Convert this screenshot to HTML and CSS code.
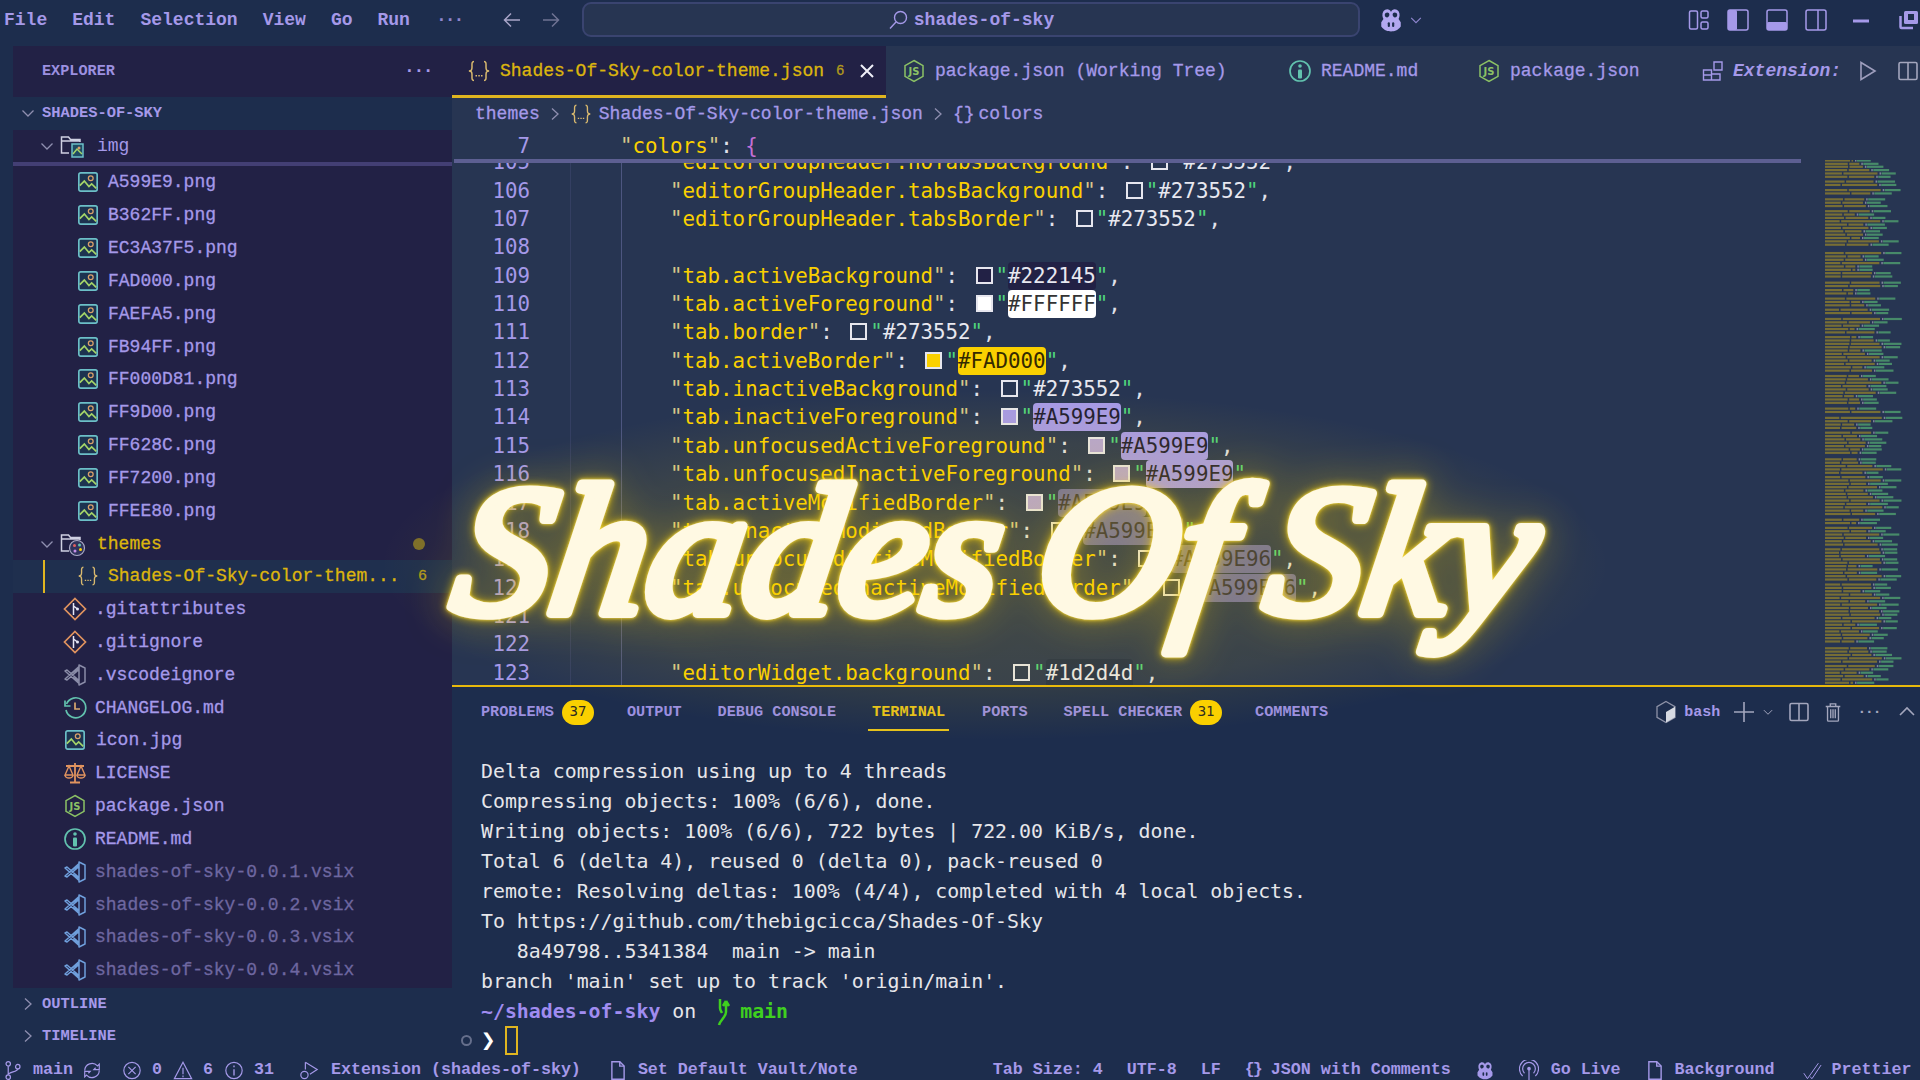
FILE: index.html
```html
<!DOCTYPE html>
<html lang="en">
<head>
<meta charset="utf-8">
<title>Shades-Of-Sky-color-theme.json - shades-of-sky</title>
<link rel="stylesheet" href="styles.css">
</head>
<body>
<svg class="defs" aria-hidden="true">
  <symbol id="i-png" viewBox="0 0 24 24"><rect x="2" y="2" width="20" height="20" rx="2" fill="#1d3350" stroke="#6cc0c8" stroke-width="1.8"/><path d="M3 16l5-5 5 6 3-3 5 5" fill="none" stroke="#a4d468" stroke-width="1.8"/><circle cx="15" cy="8" r="2.6" fill="none" stroke="#d9a06a" stroke-width="1.4"/></symbol>
  <symbol id="i-json" viewBox="0 0 24 24"><path d="M7 2.5C4.5 2.5 5 5 5 8s-.5 3.5-3 4c2.500.5 3 1 3 4s-.5 5.500 2 5.500M17 2.500c2.500 0 2 2.500 2 5.500s.5 3.500 3 4c-2.500.5-3 1-3 4s.5 5.500-2 5.500" fill="none" stroke="#d9b96e" stroke-width="1.500"/><path d="M8.500 16h1.500v1.500H8.500zM11.300 16h1.500v1.500h-1.500zM14 16h1.500v1.500H14z" fill="#d9b96e"/></symbol>
  <symbol id="i-js" viewBox="0 0 24 24"><path d="M12 1.500l9 5.200v10.600l-9 5.200-9-5.200V6.700z" fill="none" stroke="#8cc265" stroke-width="1.500"/><text x="12" y="16" text-anchor="middle" class="js-text">JS</text></symbol>
  <symbol id="i-info" viewBox="0 0 24 24"><circle cx="12" cy="12" r="10" fill="none" stroke="#62c2ae" stroke-width="1.700"/><circle cx="12" cy="7" r="1.800" fill="#62c2ae"/><rect x="10" y="10.500" width="4" height="9" rx="1" fill="#62c2ae"/></symbol>
  <symbol id="i-git" viewBox="0 0 24 24"><path d="M12 1.500L22.500 12 12 22.500 1.500 12z" fill="none" stroke="#e0935f" stroke-width="1.700"/><path d="M10.500 6v12M10.500 9l4 3" fill="none" stroke="#e6e6f5" stroke-width="1.500"/><circle cx="14.500" cy="12" r="1.500" fill="#e6e6f5"/></symbol>
  <symbol id="i-vs" viewBox="0 0 24 24"><path d="M16 2l6 3v14l-6 3zM16 5.500v13L6.500 12zM2 8l2-1 12 10.500v3L2 8zM2 16l2 1L16 6.500v-3z" fill="none" stroke="currentColor" stroke-width="1.500" stroke-linejoin="round"/></symbol>
  <symbol id="i-clock" viewBox="0 0 24 24"><path d="M3.500 8A10 10 0 1 1 3 14" fill="none" stroke="#62c2ae" stroke-width="1.700"/><path d="M2 4.500V10h5.500" fill="none" stroke="#62c2ae" stroke-width="1.700"/><path d="M12 6.500V13h5" fill="none" stroke="#d8a66f" stroke-width="1.700"/></symbol>
  <symbol id="i-law" viewBox="0 0 24 24"><path d="M12 2v19M7 21.500h10M3 5h18" fill="none" stroke="#e0935f" stroke-width="1.800"/><path d="M6 5L2 14h8zM18 5l-4 9h8zM2 14a4 3 0 0 0 8 0M14 14a4 3 0 0 0 8 0" fill="none" stroke="#e0935f" stroke-width="1.400"/></symbol>
  <symbol id="i-chev-d" viewBox="0 0 16 16"><path d="M2.500 5.500L8 11l5.500-5.500" fill="none" stroke="currentColor" stroke-width="1.300"/></symbol>
  <symbol id="i-chev-r" viewBox="0 0 16 16"><path d="M5 2.500L11 8l-6 5.500" fill="none" stroke="currentColor" stroke-width="1.300"/></symbol>
  <symbol id="i-folder-img" viewBox="0 0 26 26"><path d="M9 20H1.500V4h7l2 2.500H20V9M1.500 8H20" fill="none" stroke="#cfd0e2" stroke-width="1.500"/><rect x="12" y="11" width="11" height="13" fill="#1f4a63" stroke="#6cc0c8" stroke-width="1.500"/><path d="M13 21l4-5 5 5" fill="none" stroke="#a4d468" stroke-width="1.500"/><circle cx="19" cy="15" r="1.500" fill="#d9a06a"/></symbol>
  <symbol id="i-folder-theme" viewBox="0 0 26 26"><path d="M9 20H1.500V4h7l2 2.500H20V9M1.500 8H20" fill="none" stroke="#cfd0e2" stroke-width="1.500"/><circle cx="17" cy="17" r="7.500" fill="#30335c" stroke="#a9a9c4" stroke-width="1.200"/><circle cx="14.500" cy="14.500" r="1.500" fill="#e0605f"/><circle cx="19.500" cy="14" r="1.500" fill="#62c2ae"/><circle cx="20.500" cy="18.500" r="1.500" fill="#fad000"/><circle cx="15" cy="20" r="1.500" fill="#c68fe6"/></symbol>
  <symbol id="i-copilot" viewBox="0 0 24 24"><path d="M5 4c2-3 6-2.500 7 .5 1-3 5-3.500 7-.5 1.500 2.500 1 5.500 0 7l2 3v4c-3 4-6 4.500-9 4.500S6 22 3 18v-4l2-3C4 9.500 3.500 6.500 5 4z" fill="currentColor"/><path d="M7 5.500c1.500-1 3.500-.5 3.500 1.500S9 10 7.500 9.500 5.800 6.500 7 5.500zM17 5.500c-1.500-1-3.500-.5-3.500 1.500S15 10 16.500 9.500 18.200 6.500 17 5.500z" fill="#1d2d4d"/><rect x="9" y="14" width="2" height="4.500" rx="1" fill="#1d2d4d"/><rect x="13" y="14" width="2" height="4.500" rx="1" fill="#1d2d4d"/></symbol>
  <symbol id="i-split" viewBox="0 0 20 20"><rect x="1" y="1.500" width="18" height="17" rx="1.500" fill="none" stroke="currentColor" stroke-width="1.600"/><path d="M10 1.500v17" stroke="currentColor" stroke-width="1.600"/></symbol>
  <symbol id="i-file" viewBox="0 0 20 24"><path d="M3 2h9l5 5v15H3z" fill="none" stroke="currentColor" stroke-width="1.600"/><path d="M12 2v5h5" fill="none" stroke="currentColor" stroke-width="1.600"/></symbol>
</svg>

<div class="app">
  <header class="titlebar">
    <nav class="menu">
      <span class="menu-item">File</span><span class="menu-item">Edit</span><span class="menu-item">Selection</span><span class="menu-item">View</span><span class="menu-item">Go</span><span class="menu-item">Run</span><span class="menu-item menu-more">···</span>
    </nav>
    <div class="nav-arrows">
      <svg class="ico-20 arrow-on" viewBox="0 0 20 20"><path d="M18 10H3M9 3.500L2.500 10 9 16.500" fill="none" stroke="currentColor" stroke-width="1.500"/></svg>
      <svg class="ico-20 arrow-off" viewBox="0 0 20 20"><path d="M2 10h15M11 3.500l6.500 6.500-6.500 6.500" fill="none" stroke="currentColor" stroke-width="1.500"/></svg>
    </div>
    <div class="command">
      <svg class="ico-20" viewBox="0 0 20 20"><circle cx="12.500" cy="7.500" r="6" fill="none" stroke="currentColor" stroke-width="1.400"/><path d="M8 12l-6 6.500" stroke="currentColor" stroke-width="1.400"/></svg>
      <span>shades-of-sky</span>
    </div>
    <div class="copilot-btn">
      <svg class="ico-26"><use href="#i-copilot"/></svg>
      <svg class="ico-14"><use href="#i-chev-d"/></svg>
    </div>
    <div class="window-btns">
      <svg class="ico-22" viewBox="0 0 22 22"><rect x="1.500" y="2" width="8" height="18" rx="1.500" fill="none" stroke="currentColor" stroke-width="1.500"/><rect x="13" y="2" width="7" height="7" rx="1.500" fill="none" stroke="currentColor" stroke-width="1.500"/><rect x="13" y="13" width="7" height="7" rx="1.500" fill="none" stroke="currentColor" stroke-width="1.500"/></svg>
      <svg class="ico-22" viewBox="0 0 22 22"><rect x="1" y="1" width="20" height="20" rx="2" fill="none" stroke="currentColor" stroke-width="1.500"/><rect x="1" y="1" width="9" height="20" rx="1.500" fill="currentColor"/></svg>
      <svg class="ico-22" viewBox="0 0 22 22"><rect x="1" y="1" width="20" height="20" rx="2" fill="none" stroke="currentColor" stroke-width="1.500"/><rect x="1" y="13" width="20" height="8" rx="1.500" fill="currentColor"/></svg>
      <svg class="ico-22" viewBox="0 0 22 22"><rect x="1" y="1" width="20" height="20" rx="2" fill="none" stroke="currentColor" stroke-width="1.500"/><path d="M13 1v20" stroke="currentColor" stroke-width="1.500"/></svg>
      <svg class="ico-22 win-min" viewBox="0 0 22 22"><path d="M3 12h16" stroke="currentColor" stroke-width="3"/></svg>
      <svg class="ico-22 win-restore" viewBox="0 0 22 22"><rect x="6" y="2" width="14" height="13" rx="1.500" fill="currentColor"/><rect x="10" y="5" width="6" height="6" fill="#1d2d4d"/><path d="M2.500 7v11a1 1 0 0 0 1 1H15" fill="none" stroke="currentColor" stroke-width="2.500"/></svg>
    </div>
  </header>

  <div class="workbench">
    <aside class="sidebar">
      <div class="explorer">
        <div class="explorer-head"><span class="section-title">EXPLORER</span><span class="head-dots">···</span></div>
        <div class="root-row"><svg class="ico-16 chev"><use href="#i-chev-d"/></svg><span>SHADES-OF-SKY</span></div>
        <div class="sticky-row"><svg class="ico-16 chev"><use href="#i-chev-d"/></svg><svg class="ico-26"><use href="#i-folder-img"/></svg><span class="folder-name">img</span></div>
        <ul class="tree">
          <li class="row d2"><svg class="ico-22"><use href="#i-png"/></svg><span>A599E9.png</span></li>
          <li class="row d2"><svg class="ico-22"><use href="#i-png"/></svg><span>B362FF.png</span></li>
          <li class="row d2"><svg class="ico-22"><use href="#i-png"/></svg><span>EC3A37F5.png</span></li>
          <li class="row d2"><svg class="ico-22"><use href="#i-png"/></svg><span>FAD000.png</span></li>
          <li class="row d2"><svg class="ico-22"><use href="#i-png"/></svg><span>FAEFA5.png</span></li>
          <li class="row d2"><svg class="ico-22"><use href="#i-png"/></svg><span>FB94FF.png</span></li>
          <li class="row d2"><svg class="ico-22"><use href="#i-png"/></svg><span>FF000D81.png</span></li>
          <li class="row d2"><svg class="ico-22"><use href="#i-png"/></svg><span>FF9D00.png</span></li>
          <li class="row d2"><svg class="ico-22"><use href="#i-png"/></svg><span>FF628C.png</span></li>
          <li class="row d2"><svg class="ico-22"><use href="#i-png"/></svg><span>FF7200.png</span></li>
          <li class="row d2"><svg class="ico-22"><use href="#i-png"/></svg><span>FFEE80.png</span></li>
          <li class="row d0 themes"><svg class="ico-16 chev"><use href="#i-chev-d"/></svg><svg class="ico-26"><use href="#i-folder-theme"/></svg><span class="row-name">themes</span><i class="mod-dot"></i></li>
          <li class="row d2 selected"><svg class="ico-22"><use href="#i-json"/></svg><span class="row-name">Shades-Of-Sky-color-them...</span><span class="err-count">6</span></li>
          <li class="row d1"><svg class="ico-24"><use href="#i-git"/></svg><span>.gitattributes</span></li>
          <li class="row d1"><svg class="ico-24"><use href="#i-git"/></svg><span>.gitignore</span></li>
          <li class="row d1 grey-ico"><svg class="ico-24"><use href="#i-vs"/></svg><span>.vscodeignore</span></li>
          <li class="row d1"><svg class="ico-24"><use href="#i-clock"/></svg><span>CHANGELOG.md</span></li>
          <li class="row d1"><svg class="ico-22"><use href="#i-png"/></svg><span>icon.jpg</span></li>
          <li class="row d1"><svg class="ico-24"><use href="#i-law"/></svg><span>LICENSE</span></li>
          <li class="row d1"><svg class="ico-24"><use href="#i-js"/></svg><span>package.json</span></li>
          <li class="row d1"><svg class="ico-24"><use href="#i-info"/></svg><span>README.md</span></li>
          <li class="row d1 dim"><svg class="ico-24"><use href="#i-vs"/></svg><span>shades-of-sky-0.0.1.vsix</span></li>
          <li class="row d1 dim"><svg class="ico-24"><use href="#i-vs"/></svg><span>shades-of-sky-0.0.2.vsix</span></li>
          <li class="row d1 dim"><svg class="ico-24"><use href="#i-vs"/></svg><span>shades-of-sky-0.0.3.vsix</span></li>
          <li class="row d1 dim"><svg class="ico-24"><use href="#i-vs"/></svg><span>shades-of-sky-0.0.4.vsix</span></li>
        </ul>
      </div>
      <div class="fold-row"><svg class="ico-16 chev"><use href="#i-chev-r"/></svg><span>OUTLINE</span></div>
      <div class="fold-row"><svg class="ico-16 chev"><use href="#i-chev-r"/></svg><span>TIMELINE</span></div>
    </aside>

    <main class="main">
      <section class="editor">
        <div class="tabs">
          <div class="tab active"><svg class="ico-24"><use href="#i-json"/></svg><span>Shades-Of-Sky-color-theme.json</span><span class="tab-count">6</span><svg class="ico-16 tab-close" viewBox="0 0 16 16"><path d="M2 2l12 12M14 2L2 14" stroke="currentColor" stroke-width="2"/></svg></div>
          <div class="tab tab-wt"><svg class="ico-24"><use href="#i-js"/></svg><span>package.json (Working Tree)</span></div>
          <div class="tab tab-readme"><svg class="ico-24"><use href="#i-info"/></svg><span>README.md</span></div>
          <div class="tab tab-pkg"><svg class="ico-24"><use href="#i-js"/></svg><span>package.json</span></div>
          <div class="tab-actions">
            <svg class="ico-22" viewBox="0 0 22 22"><path d="M1.500 10h8v10h-8zM9.500 14H18v6H9.500zM1.500 15h8M12 2h8v8h-8z" fill="none" stroke="currentColor" stroke-width="1.400"/></svg>
            <span class="ext-label">Extension:</span>
            <svg class="ico-20 run" viewBox="0 0 20 20"><path d="M3 1.500L17 10 3 18.500z" fill="none" stroke="currentColor" stroke-width="1.600"/></svg>
            <svg class="ico-20 split-btn"><use href="#i-split"/></svg>
          </div>
        </div>
        <div class="breadcrumbs">
          <span>themes</span><svg class="ico-16"><use href="#i-chev-r"/></svg><svg class="ico-22"><use href="#i-json"/></svg><span>Shades-Of-Sky-color-theme.json</span><svg class="ico-16"><use href="#i-chev-r"/></svg><span class="bc-brace">{}</span><span>colors</span>
        </div>
        <div class="sticky-code">
          <span class="ln">7</span><span class="code"><span class="indent1"></span><span class="kq">"</span><span class="key">colors</span><span class="kq">"</span><span class="pun">:</span> <span class="brace">{</span></span>
        </div>
        <div class="code-area">
          <div class="lines">
            <div class="line"><span class="ln">105</span><span class="code i2"><span class="kq">"</span><span class="key">editorGroupHeader.noTabsBackground</span><span class="kq">"</span><span class="pun">:</span> <i class="swatch"></i><span class="vq">"</span><span class="val">#273552</span><span class="vq">"</span><span class="pun">,</span></span></div>
            <div class="line"><span class="ln">106</span><span class="code i2"><span class="kq">"</span><span class="key">editorGroupHeader.tabsBackground</span><span class="kq">"</span><span class="pun">:</span> <i class="swatch"></i><span class="vq">"</span><span class="val">#273552</span><span class="vq">"</span><span class="pun">,</span></span></div>
            <div class="line"><span class="ln">107</span><span class="code i2"><span class="kq">"</span><span class="key">editorGroupHeader.tabsBorder</span><span class="kq">"</span><span class="pun">:</span> <i class="swatch"></i><span class="vq">"</span><span class="val">#273552</span><span class="vq">"</span><span class="pun">,</span></span></div>
            <div class="line"><span class="ln">108</span></div>
            <div class="line"><span class="ln">109</span><span class="code i2"><span class="kq">"</span><span class="key">tab.activeBackground</span><span class="kq">"</span><span class="pun">:</span> <i class="swatch sw-night"></i><span class="vq">"</span><span class="chip chip-night">#222145</span><span class="vq">"</span><span class="pun">,</span></span></div>
            <div class="line"><span class="ln">110</span><span class="code i2"><span class="kq">"</span><span class="key">tab.activeForeground</span><span class="kq">"</span><span class="pun">:</span> <i class="swatch sw-white"></i><span class="vq">"</span><span class="chip chip-white">#FFFFFF</span><span class="vq">"</span><span class="pun">,</span></span></div>
            <div class="line"><span class="ln">111</span><span class="code i2"><span class="kq">"</span><span class="key">tab.border</span><span class="kq">"</span><span class="pun">:</span> <i class="swatch"></i><span class="vq">"</span><span class="val">#273552</span><span class="vq">"</span><span class="pun">,</span></span></div>
            <div class="line"><span class="ln">112</span><span class="code i2"><span class="kq">"</span><span class="key">tab.activeBorder</span><span class="kq">"</span><span class="pun">:</span> <i class="swatch sw-yellow"></i><span class="vq">"</span><span class="chip chip-yellow">#FAD000</span><span class="vq">"</span><span class="pun">,</span></span></div>
            <div class="line"><span class="ln">113</span><span class="code i2"><span class="kq">"</span><span class="key">tab.inactiveBackground</span><span class="kq">"</span><span class="pun">:</span> <i class="swatch"></i><span class="vq">"</span><span class="val">#273552</span><span class="vq">"</span><span class="pun">,</span></span></div>
            <div class="line"><span class="ln">114</span><span class="code i2"><span class="kq">"</span><span class="key">tab.inactiveForeground</span><span class="kq">"</span><span class="pun">:</span> <i class="swatch sw-purple"></i><span class="vq">"</span><span class="chip chip-purple">#A599E9</span><span class="vq">"</span><span class="pun">,</span></span></div>
            <div class="line"><span class="ln">115</span><span class="code i2"><span class="kq">"</span><span class="key">tab.unfocusedActiveForeground</span><span class="kq">"</span><span class="pun">:</span> <i class="swatch sw-purple2"></i><span class="vq">"</span><span class="chip chip-purple">#A599E9</span><span class="vq">"</span><span class="pun">,</span></span></div>
            <div class="line"><span class="ln">116</span><span class="code i2"><span class="kq">"</span><span class="key">tab.unfocusedInactiveForeground</span><span class="kq">"</span><span class="pun">:</span> <i class="swatch sw-purple2"></i><span class="vq">"</span><span class="chip chip-purple">#A599E9</span><span class="vq">"</span><span class="pun">,</span></span></div>
            <div class="line"><span class="ln">117</span><span class="code i2"><span class="kq">"</span><span class="key">tab.activeModifiedBorder</span><span class="kq">"</span><span class="pun">:</span> <i class="swatch sw-purple2"></i><span class="vq">"</span><span class="chip chip-faded">#A599E9</span><span class="vq">"</span><span class="pun">,</span></span></div>
            <div class="line"><span class="ln">118</span><span class="code i2"><span class="kq">"</span><span class="key">tab.inactiveModifiedBorder</span><span class="kq">"</span><span class="pun">:</span> <i class="swatch"></i><span class="vq">"</span><span class="chip chip-faded">#A599E96</span><span class="vq">"</span><span class="pun">,</span></span></div>
            <div class="line"><span class="ln">119</span><span class="code i2"><span class="kq">"</span><span class="key">tab.unfocusedActiveModifiedBorder</span><span class="kq">"</span><span class="pun">:</span> <i class="swatch"></i><span class="vq">"</span><span class="chip chip-faded">#A599E96</span><span class="vq">"</span><span class="pun">,</span></span></div>
            <div class="line"><span class="ln">120</span><span class="code i2"><span class="kq">"</span><span class="key">tab.unfocusedInactiveModifiedBorder</span><span class="kq">"</span><span class="pun">:</span> <i class="swatch"></i><span class="vq">"</span><span class="chip chip-faded">#A599E96</span><span class="vq">"</span><span class="pun">,</span></span></div>
            <div class="line"><span class="ln">121</span></div>
            <div class="line"><span class="ln">122</span></div>
            <div class="line"><span class="ln">123</span><span class="code i2"><span class="kq">"</span><span class="key">editorWidget.background</span><span class="kq">"</span><span class="pun">:</span> <i class="swatch"></i><span class="vq">"</span><span class="chip chip-deep">#1d2d4d</span><span class="vq">"</span><span class="pun">,</span></span></div>
          </div>
          <canvas class="minimap" id="minimap" width="107" height="556"></canvas>
        </div>
      </section>

      <section class="panel">
        <div class="panel-tabs">
          <span class="ptab">PROBLEMS</span><span class="badge">37</span>
          <span class="ptab">OUTPUT</span>
          <span class="ptab">DEBUG CONSOLE</span>
          <span class="ptab ptab-on">TERMINAL</span>
          <span class="ptab">PORTS</span>
          <span class="ptab">SPELL CHECKER</span><span class="badge">31</span>
          <span class="ptab">COMMENTS</span>
          <div class="panel-actions">
            <svg class="ico-24 bash-ico" viewBox="0 0 24 24"><path d="M12 1.500l9 5.200v10.600l-9 5.200-9-5.200V6.700z" fill="none" stroke="#8e93a8" stroke-width="1.300"/><path d="M12 12l9-5.300v10.600l-9 5.200z" fill="#d6dae2"/></svg>
            <span class="bash-label">bash</span>
            <svg class="ico-22 plus" viewBox="0 0 22 22"><path d="M11 1v20M1 11h20" stroke="currentColor" stroke-width="1.600"/></svg>
            <svg class="ico-12"><use href="#i-chev-d"/></svg>
            <svg class="ico-20 pa-split"><use href="#i-split"/></svg>
            <svg class="ico-20 pa-trash" viewBox="0 0 20 22"><path d="M2 5h16M7 5V2h6v3M4 5v15a1 1 0 0 0 1 1h10a1 1 0 0 0 1-1V5M7.500 8v10M10 8v10M12.500 8v10" fill="none" stroke="currentColor" stroke-width="1.500"/></svg>
            <span class="pa-dots">···</span>
            <svg class="ico-16 pa-caret" viewBox="0 0 16 16"><path d="M1 11l7-7 7 7" fill="none" stroke="currentColor" stroke-width="1.600"/></svg>
          </div>
        </div>
        <div class="terminal">
          <div class="t-line">Delta compression using up to 4 threads</div>
          <div class="t-line">Compressing objects: 100% (6/6), done.</div>
          <div class="t-line">Writing objects: 100% (6/6), 722 bytes | 722.00 KiB/s, done.</div>
          <div class="t-line">Total 6 (delta 4), reused 0 (delta 0), pack-reused 0</div>
          <div class="t-line">remote: Resolving deltas: 100% (4/4), completed with 4 local objects.</div>
          <div class="t-line">To https://github.com/thebigcicca/Shades-Of-Sky</div>
          <div class="t-line">   8a49798..5341384  main -&gt; main</div>
          <div class="t-line">branch 'main' set up to track 'origin/main'.</div>
          <div class="t-line"><span class="t-path">~/shades-of-sky</span> on <svg class="t-git" viewBox="0 0 14 28"><path d="M2 27c1-5 7-8 7-13V3M9 3L6 8M9 3l3 5M3 1v9c0 2 1 3 2 5" fill="none" stroke="currentColor" stroke-width="2.500"/></svg><span class="t-branch">main</span></div>
          <div class="t-line t-prompt"><i class="t-deco"></i><span class="t-arrow">❯</span><i class="t-cursor"></i></div>
        </div>
      </section>
    </main>
  </div>

  <footer class="statusbar">
    <svg class="st-ico" viewBox="0 0 18 22"><circle cx="4" cy="4" r="2.300" fill="none" stroke="currentColor" stroke-width="1.300"/><circle cx="4" cy="18" r="2.300" fill="none" stroke="currentColor" stroke-width="1.300"/><circle cx="14" cy="7" r="2.300" fill="none" stroke="currentColor" stroke-width="1.300"/><path d="M4 6.500v9M14 9.500c0 3-10 3-10 6" fill="none" stroke="currentColor" stroke-width="1.300"/></svg>
    <span class="st-t g-a">main</span>
    <svg class="st-ico g-b" viewBox="0 0 22 22"><path d="M3 11a8 8 0 0 1 14-5l2-2v6h-6l2-2M19 11a8 8 0 0 1-14 5l-2 2v-6h6l-2 2" fill="none" stroke="currentColor" stroke-width="1.300"/></svg>
    <svg class="st-ico g-c" viewBox="0 0 22 22"><circle cx="11" cy="11" r="9" fill="none" stroke="currentColor" stroke-width="1.300"/><path d="M7 7l8 8M15 7l-8 8" stroke="currentColor" stroke-width="1.300"/></svg>
    <span class="st-t g-a">0</span>
    <svg class="st-ico g-d" viewBox="0 0 22 22"><path d="M11 2l9.500 18h-19zM11 8v7M11 16.500v2" fill="none" stroke="currentColor" stroke-width="1.300"/></svg>
    <span class="st-t g-a">6</span>
    <svg class="st-ico g-d" viewBox="0 0 22 22"><circle cx="11" cy="11" r="9" fill="none" stroke="currentColor" stroke-width="1.300"/><path d="M11 9.500v7M11 5.500v2" stroke="currentColor" stroke-width="1.500"/></svg>
    <span class="st-t g-a">31</span>
    <svg class="st-ico g-e" viewBox="0 0 22 22"><path d="M7 2l13 8-8 5M7 2v8" fill="none" stroke="currentColor" stroke-width="1.300"/><circle cx="6" cy="16" r="4" fill="none" stroke="currentColor" stroke-width="1.300"/></svg>
    <span class="st-t g-a2">Extension (shades-of-sky)</span>
    <svg class="st-ico g-f" viewBox="0 0 20 24"><use href="#i-file"/></svg>
    <span class="st-t g-a">Set Default Vault/Note</span>
    <span class="st-t st-right">Tab Size: 4</span>
    <span class="st-t st-gap">UTF-8</span>
    <span class="st-t st-gap">LF</span>
    <span class="st-t st-gap"><span class="st-brace">{}</span> JSON with Comments</span>
    <svg class="st-ico st-gap"><use href="#i-copilot"/></svg>
    <svg class="st-ico st-gap" viewBox="0 0 22 22"><circle cx="11" cy="9" r="2" fill="currentColor"/><path d="M11 10v12M6 14a7 7 0 1 1 10 0M4 17a10.500 10.500 0 1 1 14 0" fill="none" stroke="currentColor" stroke-width="1.300"/></svg>
    <span class="st-t g-a2">Go Live</span>
    <svg class="st-ico st-gap" viewBox="0 0 20 24"><use href="#i-file"/></svg>
    <span class="st-t g-a">Background</span>
    <svg class="st-ico st-gap2" viewBox="0 0 22 22"><path d="M2 14l4 6L18 3M9 18l2 2L21 5" fill="none" stroke="currentColor" stroke-width="1.100"/></svg>
    <span class="st-t g-a">Prettier</span>
  </footer>

  <div class="logo-glow"></div>
  <svg class="logo" viewBox="0 0 1300 320"><text class="logo-text" x="30" y="190">Shades Of Sky</text></svg>
</div>
<script src="minimap.js"></script>
</body>
</html>
```

FILE: styles.css
```css
* { box-sizing: border-box; }
html, body { margin: 0; padding: 0; }
body { background: #1d2d4d; }
.defs { position: absolute; width: 0; height: 0; overflow: hidden; }
.js-text { font: 700 10px "DejaVu Sans", sans-serif; fill: #8cc265; }

.app {
  position: relative; width: 1920px; height: 1080px; overflow: hidden;
  display: flex; flex-direction: column;
  background: #1d2d4d; color: #a599e9;
  font-family: "Liberation Mono", monospace; font-size: 18px;
}
svg { flex: none; display: block; }
.ico-12 { width: 12px; height: 12px; }
.ico-14 { width: 14px; height: 14px; }
.ico-16 { width: 16px; height: 16px; }
.ico-20 { width: 20px; height: 20px; }
.ico-22 { width: 22px; height: 22px; }
.ico-24 { width: 24px; height: 24px; }
.ico-26 { width: 26px; height: 26px; }

/* title bar */
.titlebar { flex: none; height: 46px; display: flex; align-items: center; padding-bottom: 7px; }
.menu { display: flex; align-items: center; padding-left: 4px; gap: 25px; width: 502px; font-weight: 700; }
.menu-item { line-height: 20px; }
.menu-more { color: #8f86cf; letter-spacing: -2px; margin-left: 1px; }
.nav-arrows { display: flex; gap: 19px; width: 80px; }
.arrow-on { color: #a9a5c8; }
.arrow-off { color: #6f7393; }
.command {
  width: 778px; height: 35px; flex: none;
  display: flex; align-items: center; justify-content: center; gap: 6px;
  background: #273552; border: 2px solid #3a4470; border-radius: 9px;
  font-weight: 700;
}
.copilot-btn { display: flex; align-items: center; gap: 5px; margin-left: 18px; color: #b3a8f0; }
.copilot-btn .ico-14 { color: #8f86cf; }
.window-btns { display: flex; align-items: center; gap: 17px; margin-left: 265px; color: #a599e9; }
.win-min { margin-left: 6px; }
.win-restore { margin-left: 9px; }

/* layout */
.workbench { flex: 1; min-height: 0; display: flex; }
.sidebar { flex: none; width: 452px; padding-left: 13px; display: flex; flex-direction: column; }
.explorer { flex: none; height: 942px; background: #222145; display: flex; flex-direction: column; }
.main { flex: 1; min-width: 0; display: flex; flex-direction: column; }

/* sidebar */
.explorer-head { flex: none; height: 51px; padding: 0 20px 2px 29px; display: flex; align-items: center; justify-content: space-between; }
.section-title { font-size: 15.200px; font-weight: 700; color: #9c90e0; }
.head-dots { font-weight: 700; letter-spacing: -1.500px; }
.root-row {
  flex: none; height: 33px; display: flex; align-items: center; gap: 6px; padding: 0 0 1px 7px;
  background: #1d2d4d; font-size: 15.400px; font-weight: 700;
}
.chev { color: #8f8fb0; }
.sticky-row {
  flex: none; height: 36px; padding: 0 0 0 26px; display: flex; align-items: center; gap: 5px;
  border-bottom: 4px solid #433f74;
}
.folder-name { margin-left: 6px; }
.tree { list-style: none; margin: 0; padding: 0; }
.row { height: 32.830px; display: flex; align-items: center; gap: 9px; -webkit-text-stroke: .3px currentColor; }
.d2 { padding-left: 64px; }
.d1 { padding-left: 50px; }
.d0 { padding-left: 26px; gap: 5px; }
.d1 .ico-22 { margin: 0 1px; }
.d1 .ico-24 { margin-right: -1px; }
.themes .row-name { color: #dcb50e; margin-left: 6px; flex: 1; }
.mod-dot { width: 12px; height: 12px; margin-right: 27px; border-radius: 50%; background: #7d6e2a; }
.selected { position: relative; background: #1f2f4e; color: #dcb50e; }
.selected::before { content: ""; position: absolute; left: 30px; top: 0; bottom: 0; width: 2px; background: #e0b520; }
.selected .row-name { flex: 1; }
.err-count { margin-right: 25px; font-size: 15px; color: #b29a1c; }
.grey-ico svg { color: #8a8ca8; }
.dim { color: #6e67a0; }
.dim svg { color: #6f9fdc; }
.fold-row { flex: none; height: 32px; display: flex; align-items: center; gap: 6px; padding-left: 7px; font-size: 15.400px; font-weight: 700; }
.fold-row:first-of-type { margin-top: 2px; }

/* editor */
.editor { flex: none; height: 639px; background: #273552; display: flex; flex-direction: column; }
.tabs { flex: none; height: 52px; display: flex; align-items: stretch; }
.tab { flex: none; display: flex; align-items: center; gap: 9px; padding: 0 0 3px 16px; -webkit-text-stroke: .3px currentColor; }
.tab.active { width: 434px; background: #222145; color: #dcb50e; border-bottom: 3px solid #e0b520; padding: 0 0 0 15px; }
.tab-wt { width: 386px; }
.tab-readme { width: 189px; }
.tab-pkg { width: 236px; }
.tab-count { font-size: 14px; margin-left: 3px; color: #b29a1c; }
.tab-close { color: #f0f0f8; margin-left: 6px; }
.tab-actions { display: flex; align-items: center; padding: 0 0 3px 5px; }
.ext-label { font-weight: 700; font-style: italic; margin-left: 9px; }
.run { margin-left: 17px; color: #9e9ebd; }
.split-btn { margin-left: 20px; color: #a3a6bd; }
.breadcrumbs { flex: none; height: 33px; display: flex; align-items: center; padding: 0 0 2px 23px; gap: 7px; -webkit-text-stroke: .3px currentColor; }
.breadcrumbs .ico-16 { color: #8f8fb0; }
.bc-brace { margin-right: -3px; }
.sticky-code {
  flex: none; height: 29px; padding-top: 1px; position: relative; z-index: 2; display: flex; align-items: center; white-space: pre;
  font: 20.800px/28px "DejaVu Sans Mono", monospace; color: #e8e8f0; background: #273552;
}
.sticky-code::after { content: ""; position: absolute; left: 2px; right: 119px; bottom: -3px; height: 4px; background: #5d5f92; }
.indent1 { display: inline-block; width: 50px; }
.code-area {
  position: relative; flex: 1; min-height: 0; overflow: hidden;
  background:
    linear-gradient(#343f62, #343f62) 118px 0 / 1px 100% no-repeat,
    linear-gradient(#4d5680, #4d5680) 169px 0 / 1px 100% no-repeat;
}
.lines { margin-top: -11.800px; font: 20.800px/28.370px "DejaVu Sans Mono", monospace; color: #e8e8f0; }
.line { height: 28.370px; display: flex; white-space: pre; }
.ln { flex: none; width: 78px; text-align: right; color: #a599e9; font-family: "DejaVu Sans Mono", monospace; }
.code { margin-left: 40px; }
.i2 { padding-left: 100px; }
.key { color: #fad000; }
.kq { color: #d8c78a; }
.vq { color: #4fd57d; }
.val { color: #e8e8f0; }
.pun { color: #e0e0ea; }
.brace { color: #c36fd6; }
.swatch { display: inline-block; width: 17px; height: 17px; margin: 0 3px 0 5px; border: 2px solid #e6e6ee; vertical-align: -1px; }
.sw-night { background: #222145; }
.sw-white { background: #fff; }
.sw-yellow { background: #fad000; }
.sw-purple { background: #a599e9; }
.sw-purple2 { background: #b3a3d6; }
.chip { display: inline-block; height: 28px; border-radius: 4px; }
.chip-night { background: #222145; color: #e8e8f0; }
.chip-white { background: #fff; color: #333; }
.chip-yellow { background: #fad000; color: #332a00; }
.chip-purple { background: #a599e9; color: #1c1a33; }
.chip-faded { background: rgba(165,153,233,.55); color: #2b2a40; }
.chip-deep { background: #1f2d4b; color: #e8e8f0; }
.minimap { position: absolute; right: 0; top: -1px; }

/* panel */
.panel { flex: 1; min-height: 0; border-top: 2px solid #e8b90c; display: flex; flex-direction: column; }
.panel-tabs { flex: none; height: 46px; display: flex; align-items: flex-start; padding: 10px 5px 0 29px; font-size: 15.200px; font-weight: 700; }
.ptab { height: 34px; line-height: 30px; margin-right: 36px; color: #9c90e0; }
.ptab-on { color: #e6c21c; border-bottom: 2px solid #e6c21c; padding: 0 4px; margin: 0 33px -2px -4px; }
.badge { height: 25px; width: 32px; line-height: 22px; margin: 3px 33px 0 -28px; text-align: center; border-radius: 13px; background: #fad000; color: #2b2a20; font-size: 14px; font-weight: 400; font-family: "DejaVu Sans Mono", monospace; }
.panel-actions { margin-left: auto; display: flex; align-items: center; height: 30px; color: #a3a6bd; }
.bash-label { color: #a599e9; margin: 0 13px 0 6px; font-size: 15px; }
.plus { margin-right: 7px; }
.pa-split { margin-left: 15px; }
.pa-trash { margin-left: 14px; }
.pa-dots { margin-left: 14px; letter-spacing: -1.500px; }
.pa-caret { margin-left: 19px; }
.terminal { flex: 1; padding: 24px 0 0 29px; font: 19.880px/30px "DejaVu Sans Mono", monospace; color: #e6e6ea; }
.t-line { height: 30px; display: flex; white-space: pre; align-items: center; }
.t-path { color: #a08cf0; font-weight: 700; }
.t-git { width: 14px; height: 28px; color: #3fd01f; margin: 0 8px 0 9px; }
.t-branch { color: #3fd01f; font-weight: 700; margin-left: 1px; }
.t-prompt { position: relative; margin-top: -2px; }
.t-deco { position: absolute; left: -20px; top: 10px; width: 11px; height: 11px; border: 2px solid #666f8c; border-radius: 50%; }
.t-arrow { color: #fff; font-weight: 700; font-size: 24px; }
.t-cursor { width: 13px; height: 29px; margin-left: 10px; border: 2px solid #e0b520; }

/* status bar */
.statusbar { flex: none; height: 23px; display: flex; align-items: center; padding: 3px 0 0 3px; font-size: 16.670px; font-weight: 700; color: #a599e9; white-space: pre; }
.st-ico { width: 20px; height: 21px; }
.st-t { line-height: 20px; }
.g-a { margin-left: 10px; }
.g-a2 { margin-left: 12px; }
.g-b { margin-left: 9px; }
.g-c { margin-left: 20px; }
.g-d { margin-left: 11px; }
.g-e { margin-left: 25px; }
.g-f { margin-left: 27px; }
.st-right { margin-left: 135px; }
.st-gap { margin-left: 24px; }
.st-gap2 { margin-left: 27px; }
.st-brace { letter-spacing: -2px; }

/* overlay logo */
.logo-glow {
  position: absolute; left: 380px; top: 390px; width: 1230px; height: 350px; pointer-events: none;
  background: radial-gradient(closest-side, rgba(250,208,0,.15), rgba(250,208,0,.09) 70%, rgba(250,208,0,0));
}
.logo {
  position: absolute; left: 445px; top: 423px; width: 1300px; height: 320px; overflow: visible;
  filter: drop-shadow(0 0 1.500px #ffe24a) drop-shadow(0 0 4px rgba(250,208,0,.75)) drop-shadow(0 0 20px rgba(250,208,0,.32));
}
.logo-text {
  font: italic 400 185px "Liberation Serif", serif; word-spacing: -10px;
  fill: #fff9e3; stroke: #fff9e3; stroke-width: 10px; stroke-linejoin: round; stroke-linecap: round;
  transform: scaleX(1.040) skewX(-8deg);
}
```

FILE: minimap.js
```js
(function () {
  var c = document.getElementById('minimap');
  var g = c.getContext('2d');
  var spans = [[55,65],[72,105],[112,128],[135,152],[160,185],[192,290],[305,375],[385,395],[405,420],[428,450],[458,472],[483,522],[532,625],[637,715],[725,740],[750,780],[790,850],[862,900],[910,1015],[1025,1040],[1047,1057],[1065,1095],[1105,1190],[1200,1360],[1372,1410],[1420,1475],[1483,1520],[1536,1548]];
  var rowH = 3.35;
  var seed = 7;
  function rnd() { seed = (seed * 16807) % 2147483647; return seed / 2147483647; }
  spans.forEach(function (s) {
    var top = s[0] / 2.7 - 20;
    var end = s[1] / 2.7 - 20;
    for (var y = top; y < end; y += rowH) {
      var w = 28 + rnd() * 30;
      var gap = 14 + rnd() * 12;
      var x = 12;
      g.fillStyle = 'rgba(170,145,35,.62)';
      g.fillRect(x, y, gap, 2.2);
      g.fillRect(x + gap + 1.5, y, w - gap - 1.5, 2.2);
      g.fillStyle = 'rgba(165,165,185,.7)';
      g.fillRect(x + w + 2, y, 1.5, 2.2);
      g.fillStyle = 'rgba(85,175,115,.7)';
      g.fillRect(x + w + 4, y, 12 + rnd() * 6, 2.2);
    }
  });
  g.fillStyle = 'rgba(250,208,0,.5)';
  g.fillRect(0, 546, 107, 6);
  g.fillStyle = '#ffcf00';
  g.fillRect(12, 546, 46, 6);
})();
```
